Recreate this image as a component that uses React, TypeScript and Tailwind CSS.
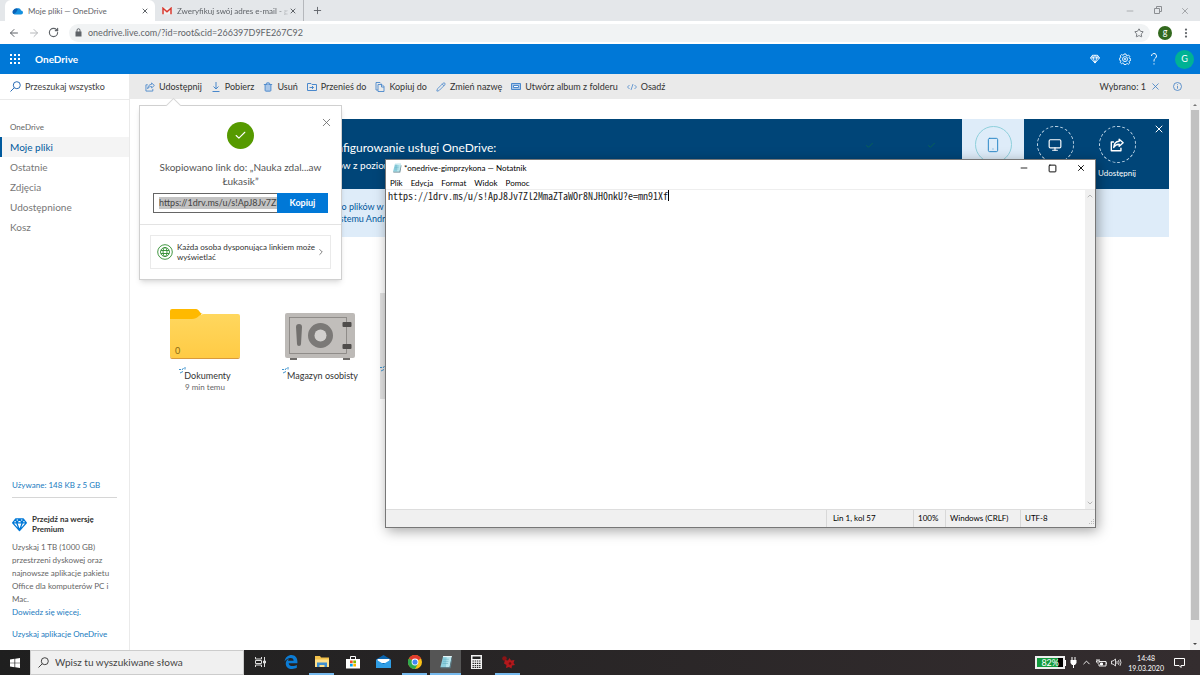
import type { ReactNode } from 'react';
import {
  ArrowLeft, ArrowRight, Check, ChevronDown, ChevronRight, ChevronUp, Minus, Monitor,
  MoreVertical, Pencil, Plus, RotateCw, Smartphone, Square, Star, Trash2, X,
} from 'lucide-react';

const LINK = 'https://1drv.ms/u/s!ApJ8Jv7Zl2MmaZTaWOr8NJH0nkU?e=mn91Xf';

const SearchIcon = () => (
  <svg width="11" height="11" viewBox="0 0 11 11" fill="none" stroke="currentColor">
    <circle cx="6.800" cy="4.200" r="3.500" />
    <path d="M4.300 6.700L.5 10.500" />
  </svg>
);

const ShareIcon = ({ size = 10, stroke = 1 }: { size?: number; stroke?: number }) => (
  <svg width={size} height={size} viewBox="0 0 16 16" fill="none" stroke="currentColor" strokeWidth={stroke} strokeLinejoin="round">
    <path d="M4.500 4.500H1.500v10h11v-3.500" />
    <path d="M10.500 1.500l4.500 4-4.500 4V7.200C7.500 7.200 5.600 8.200 4.200 10.800 4.500 6.500 7 3.900 10.500 3.700z" />
  </svg>
);

const DiamondIcon = ({ size = 10 }: { size?: number }) => (
  <svg width={size} height={size} viewBox="0 0 16 16" fill="none" stroke="currentColor" strokeWidth="1.4" strokeLinejoin="round">
    <path d="M4 2h8l3.300 4.200L8 14.500.7 6.200zM.7 6.200h14.600M5 6.200L8 14.500l3-8.300M4 2l1 4.200L8 2l3 4.200L12 2" />
  </svg>
);

const GearIcon = () => (
  <svg width="12" height="12" viewBox="0 0 24 24" fill="none" stroke="currentColor" strokeWidth="1.800" strokeLinejoin="round">
    <path d="M10 2h4l.7 2.800 1.700.7 2.500-1.500 2.600 2.700-1.300 2.500.6 1.600 2.700.7v3.400l-2.700.8-.6 1.600 1.400 2.500-2.700 2.600-2.500-1.400-1.700.7L14 23h-4l-.7-2.300-1.700-.7-2.500 1.400-2.700-2.600 1.400-2.500-.6-1.600-2.700-.8v-3.400l2.700-.7.6-1.600L2.500 5.700l2.600-2.700 2.500 1.500 1.700-.7z" />
    <circle cx="12" cy="12.200" r="5" />
    <circle cx="12" cy="12.200" r="1.600" />
  </svg>
);

const NotepadIcon = ({ size = 10 }: { size?: number }) => (
  <svg width={size} height={size} viewBox="0 0 20 20">
    <path d="M6 1.500h12l-3 16H2z" fill="#8fd0de" />
    <path d="M11 1.500h7l-3 16h-5z" fill="#b9e6ee" />
    <path d="M2 17.500L15 17.500l3-13 1 .5-2.500 14H3z" fill="#5d7f8a" />
    <path d="M6 1.500h12v1.300H5.700z" fill="#e8f4f6" />
    <path d="M6 6h8M5.500 9h8M5 12h8" stroke="#5aa9bd" strokeWidth=".8" />
  </svg>
);

const commands: { label: string; icon: ReactNode }[] = [
  { label: 'Udostępnij', icon: <ShareIcon stroke={1.400} /> },
  {
    label: 'Pobierz',
    icon: (
      <svg width="10" height="10" viewBox="0 0 10 10" fill="none" stroke="currentColor">
        <path d="M5 0v7M2.500 4.500L5 7l2.500-2.500M1.500 9.500h7" />
      </svg>
    ),
  },
  { label: 'Usuń', icon: <Trash2 size={10} strokeWidth={2.2} fill="#a9c6e8" /> },
  {
    label: 'Przenieś do',
    icon: (
      <svg width="10" height="10" viewBox="0 0 10 10" fill="none" stroke="currentColor">
        <path d="M.5 1.500h3.500l1 1h4.500v6h-9zM2.500 5.500h4M5 4l1.500 1.500L5 7" />
      </svg>
    ),
  },
  {
    label: 'Kopiuj do',
    icon: (
      <svg width="10" height="10" viewBox="0 0 10 10" fill="none" stroke="currentColor" strokeWidth=".9">
        <path d="M3 8H1V.500h4l1 1M3 2.500h4l2 2v5H3zM6.500 2.500V5H9" />
      </svg>
    ),
  },
  { label: 'Zmień nazwę', icon: <Pencil size={10} strokeWidth={2} /> },
  {
    label: 'Utwórz album z folderu',
    icon: (
      <svg width="10" height="10" viewBox="0 0 10 10" fill="#a9c6e8" stroke="currentColor">
        <path d="M.5 1.500h9v6h-9z" />
        <path d="M2.500 3.500h5v2h-5z" fill="#fff" />
      </svg>
    ),
  },
  {
    label: 'Osadź',
    icon: (
      <svg width="10" height="10" viewBox="0 0 10 10" fill="none" stroke="currentColor" strokeWidth=".8">
        <path d="M2.500 3L.5 5l2 2M7.500 3l2 2-2 2M6 2L4 8" />
      </svg>
    ),
  },
];

const navItems = ['Moje pliki', 'Ostatnie', 'Zdjęcia', 'Udostępnione', 'Kosz'];

const BrowserChrome = () => (
  <header>
    <div className="flex h-[21px] items-end bg-[#e4e7ea] pl-[5px] text-[8px] text-[#5f6368]">
      <div className="flex h-[21px] w-[150px] items-center rounded-t-md bg-white pr-1.5 pl-[7px]">
        <svg width="11" height="8" viewBox="0 0 22 14">
          <path d="M8 3a6 6 0 0 1 10 3 4 4 0 0 1 0 8H5a5 5 0 0 1-1-9z" fill="#1490df" />
          <path d="M3 5a6 6 0 0 1 9-2l-4 7-5 3A5 5 0 0 1 3 5z" fill="#0a5fb4" />
        </svg>
        <button className="ml-[5px] flex-1 text-left">Moje pliki — OneDrive</button>
        <button aria-label="Zamknij kartę"><X size={8} strokeWidth={3} /></button>
      </div>
      <div className="flex h-[21px] w-[149px] items-center border-r border-[#b5b8bc] pr-1.5 pl-[7px]">
        <svg width="10" height="8" viewBox="0 0 20 15">
          <path d="M1 1h18v13H1z" fill="#f1f1f1" />
          <path d="M2 14V2l8 7 8-7v12" fill="none" stroke="#d93a30" strokeWidth="3" />
        </svg>
        <button className="ml-[5px] flex-1 overflow-hidden text-left whitespace-nowrap [mask-image:linear-gradient(to_right,black_90%,transparent)]">
          Zweryfikuj swój adres e-mail - g
        </button>
        <button aria-label="Zamknij kartę"><X size={8} strokeWidth={3} /></button>
      </div>
      <button aria-label="Nowa karta" className="ml-2 self-center"><Plus size={11} strokeWidth={2} /></button>
      <div className="ml-auto flex items-center gap-[18px] self-center pr-2.5 text-[#8b8e92]">
        <button aria-label="Minimalizuj"><Minus size={10} strokeWidth={1.5} /></button>
        <button aria-label="Przywróć">
          <svg width="9" height="9" viewBox="0 0 9 9" fill="none" stroke="currentColor">
            <path d="M1.500 2.500h5v5h-5zM3.500 2.500v-2h5v5h-2" />
          </svg>
        </button>
        <button aria-label="Zamknij"><X size={10} strokeWidth={1.800} /></button>
      </div>
    </div>
    <div className="flex h-[23px] items-center bg-white pr-2 pl-2 text-[#5f6368]">
      <button aria-label="Wstecz"><ArrowLeft size={12} strokeWidth={2} /></button>
      <button aria-label="Dalej" className="ml-2 text-[#b6b8bb]"><ArrowRight size={12} strokeWidth={2} /></button>
      <button aria-label="Odśwież" className="ml-2"><RotateCw size={11} strokeWidth={2.5} /></button>
      <div className="ml-2.5 flex h-[18px] flex-1 items-center rounded-full bg-[#f1f3f4] px-1.5">
        <svg width="7" height="9" viewBox="0 0 14 18">
          <path d="M1 7h12v10H1z" fill="#5f6368" />
          <path d="M4 8V4.500a3 3 0 0 1 6 0V8" fill="none" stroke="#5f6368" strokeWidth="2" />
        </svg>
        <input aria-label="Adres" defaultValue="onedrive.live.com/?id=root&cid=266397D9FE267C92" className="ml-1.5 flex-1 bg-transparent text-[9px] outline-none" />
        <button aria-label="Dodaj do zakładek"><Star size={10} strokeWidth={2} /></button>
      </div>
      <button aria-label="Profil" className="ml-2 flex size-[14px] items-center justify-center rounded-full bg-[#33691e] pb-0.5 text-[9px] leading-none text-white">g</button>
      <button aria-label="Menu" className="ml-2"><MoreVertical size={12} strokeWidth={2.5} /></button>
    </div>
  </header>
);

const SuiteBar = () => (
  <div className="flex h-[30px] items-center bg-[#0078d7] pr-1.5 pl-2.5 text-white">
    <button aria-label="Aplikacje">
      <svg width="10" height="10" viewBox="0 0 10 10" fill="currentColor">
        {[0, 4, 8].map((y) => [0, 4, 8].map((x) => <rect key={`${x}-${y}`} x={x} y={y} width="2" height="2" />))}
      </svg>
    </button>
    <a href="#" className="ml-[15px] text-[10px] font-bold">OneDrive</a>
    <div className="ml-auto flex items-center gap-[19px]">
      <button aria-label="Premium"><DiamondIcon /></button>
      <button aria-label="Ustawienia"><GearIcon /></button>
      <button aria-label="Pomoc">
        <svg width="8" height="12" viewBox="0 0 8 12" fill="none" stroke="currentColor">
          <path d="M1.500 3a2.500 2.500 0 1 1 4 2C4.500 5.900 4 6.400 4 8.500M4 10.300v1.200" />
        </svg>
      </button>
      <button aria-label="Konto" className="-ml-0.5 size-[19px] rounded-full bg-[#00b294] text-[9px]">G</button>
    </div>
  </div>
);

const Sidebar = () => (
  <aside className="flex w-[130px] shrink-0 flex-col border-r border-[#eaeaea] text-[#666]">
    <label className="flex h-[26px] items-center border-b border-[#eaeaea] pl-2.5 text-[#2b6cb5]">
      <SearchIcon />
      <input aria-label="Szukaj" placeholder="Przeszukaj wszystko" className="ml-1 w-[95px] text-[9px] outline-none placeholder:text-[#444]" />
    </label>
    <p className="mt-[21px] pl-2.5 text-[8px] leading-3">OneDrive</p>
    <nav className="mt-1 flex flex-col text-[10px] leading-5">
      {navItems.map((item, i) => (
        <a
          key={item}
          href="#"
          className={i === 0 ? 'border-l-2 border-[#005a9e] bg-[#f4f4f4] pl-2 text-[#005a9e]' : 'pl-2.5 text-[#777]'}
        >
          {item}
        </a>
      ))}
    </nav>
    <div className="mt-auto px-3 pb-[10px] text-[8px]">
      <a href="#" className="block border-b border-[#d6d6d6] pb-1.5 leading-3 text-[#1a7bc0]">Używane: 148 KB z 5 GB</a>
      <div className="mt-4 flex items-center gap-[5px] leading-[10px] font-bold text-[#333]">
        <span className="text-[#0078d7]"><DiamondIcon size={15} /></span>
        <span>Przejdź na wersję<br />Premium</span>
      </div>
      <p className="mt-[7px] leading-[13px]">
        Uzyskaj 1 TB (1000 GB)<br />przestrzeni dyskowej oraz<br />najnowsze aplikacje pakietu<br />Office dla komputerów PC i<br />Mac.
      </p>
      <a href="#" className="block leading-3 text-[#1a7bc0]">Dowiedz się więcej.</a>
      <a href="#" className="mt-2.5 block leading-3 text-[#1a7bc0]">Uzyskaj aplikacje OneDrive</a>
    </div>
  </aside>
);

const CommandBar = () => (
  <div className="flex h-[25px] items-center bg-[#eaeaea] pr-[18px] pl-[15px] text-[9px] text-[#333]">
    <div className="flex items-center gap-[9px]">
      {commands.map((c) => (
        <button key={c.label} className="flex items-center gap-1 whitespace-nowrap">
          <span className="text-[#4a88cc]">{c.icon}</span>
          {c.label}
        </button>
      ))}
    </div>
    <div className="ml-auto flex items-center">
      <span>Wybrano: 1</span>
      <button aria-label="Wyczyść" className="ml-1 text-[#3f7fc4]"><X size={11} strokeWidth={1.800} /></button>
      <button aria-label="Informacje" className="ml-3 text-[#3f7fc4]">
        <svg width="9" height="9" viewBox="0 0 9 9" fill="none" stroke="currentColor" strokeWidth=".8">
          <circle cx="4.500" cy="4.500" r="4" />
          <path d="M4.500 4v2.700M4.500 2.300v.9" />
        </svg>
      </button>
    </div>
  </div>
);

const Step = ({ icon, label, active }: { icon: ReactNode; label: string; active?: boolean }) => (
  <button className={active ? 'flex w-[62px] flex-col items-center bg-[#deecf9] pt-[7px] text-[#2b88c8]' : 'flex w-[62px] flex-col items-center pt-[7px]'}>
    <span className={active ? 'flex size-[37px] items-center justify-center rounded-full border border-[#8ed0dc]' : 'flex size-[37px] items-center justify-center rounded-full border border-dashed border-[#c7dcec]'}>
      {icon}
    </span>
    <span className="mt-1 text-[8px] leading-3">{label}</span>
  </button>
);

const Banner = () => (
  <section className="mr-[21px] ml-[25px]">
    <div className="flex h-[70px] bg-[#004578] text-white">
      <div className="flex-1 pt-5 pl-[167px] whitespace-nowrap">
        <h2 className="text-[12px] leading-[18px]">Konfigurowanie usługi OneDrive:</h2>
        <p className="text-[10px] leading-4">plików z poziomu</p>
      </div>
      <div className="flex w-[124px] justify-around pt-[22px] text-[#0b6a4b]">
        <Check size={9} />
        <Check size={9} />
      </div>
      <Step active label="Telefon" icon={<Smartphone size={16} strokeWidth={1.500} />} />
      <Step label="Komputer" icon={<Monitor size={14} strokeWidth={2} />} />
      <Step label="Udostępnij" icon={<ShareIcon size={14} stroke={1.600} />} />
      <button aria-label="Zamknij baner" className="mt-1 mr-1 ml-[5px] self-start"><X size={12} strokeWidth={2} /></button>
    </div>
    <div className="h-[48px] bg-[#deecf9] pt-3 pl-[167px] text-[9px] leading-3 whitespace-nowrap text-[#00579b]">
      <p>np. do plików w</p>
      <p>w systemu Android</p>
    </div>
  </section>
);

const Sparkle = () => (
  <svg width="7" height="7" viewBox="0 0 7 7" fill="none" stroke="#2b88c8" strokeWidth=".9" className="-mt-0.5 -mr-0.5">
    <path d="M0 2.500h2M3 3l1.500-2M6 0v2.500M1 6l3-1.500" />
  </svg>
);

const FolderArt = () => (
  <svg width="70" height="50" viewBox="0 0 70 50">
    <defs>
      <linearGradient id="folder" x1="0" y1="0" x2="0" y2="1">
        <stop offset="0" stopColor="#ffd75e" />
        <stop offset="1" stopColor="#ffcb45" />
      </linearGradient>
    </defs>
    <path d="M0 2a2 2 0 0 1 2-2h24c3 0 4 5 7 5h-2v8H0z" fill="#ffb900" />
    <path d="M0 10h22c6 0 7-5 12-5h34a2 2 0 0 1 2 2v40a2 2 0 0 1-2 2H2a2 2 0 0 1-2-2z" fill="url(#folder)" />
    <path d="M0 47a2 2 0 0 0 2 2h66a2 2 0 0 0 2-2v1a2 2 0 0 1-2 2H2a2 2 0 0 1-2-2z" fill="#d99a3c" />
  </svg>
);

const SafeArt = () => (
  <svg width="70" height="48" viewBox="0 0 70 48">
    <path d="M5 44h7v3H5zM58 44h7v3h-7z" fill="#6f6d6b" />
    <rect width="70" height="45" rx="2" fill="#bdbab7" />
    <rect x="4.500" y="4.500" width="57" height="36" fill="#c1bebb" stroke="#83807e" strokeWidth=".8" />
    <rect x="57.500" y="9" width="9" height="5" rx="1" fill="#4f4d4b" />
    <rect x="57.500" y="31" width="9" height="5" rx="1" fill="#4f4d4b" />
    <path d="M11 14a3 3 0 0 1 6 0l-1 17a2 2 0 0 1-4 0z" fill="#72706e" />
    <circle cx="35.500" cy="22.500" r="9" fill="none" stroke="#7b7977" strokeWidth="7" />
    <circle cx="35.500" cy="22.500" r="6" fill="#d2d0ce" />
  </svg>
);

const Files = () => (
  <div className="mt-[56px] flex gap-[5px] pl-5 text-[9px] text-[#333]">
    <a href="#" className="flex h-[106px] w-[110px] flex-col items-center pt-4">
      <span className="relative"><FolderArt /><span className="absolute bottom-0.5 left-[5px] text-[9px] text-[#8a6a16]">0</span></span>
      <span className="mt-2.5 flex leading-[14px]"><Sparkle />Dokumenty</span>
      <span className="text-[8px] leading-2 text-[#666]">9 min temu</span>
    </a>
    <a href="#" className="flex h-[106px] w-[110px] flex-col items-center pt-5">
      <SafeArt />
      <span className="mt-2 flex leading-[14px]"><Sparkle />Magazyn osobisty</span>
    </a>
    <a href="#" aria-label="Folder" className="h-[106px] w-[110px] bg-[#e3e3e3] pt-[74px]"><Sparkle /></a>
  </div>
);

const ShareCallout = () => (
  <div role="dialog" aria-label="Udostępnianie" className="absolute top-[105px] left-[139px] w-[203px] border border-[#d0d0d0] bg-white pt-4 text-center shadow-md">
    <span className="absolute -top-[6px] left-[28px] size-[11px] rotate-45 border-t border-l border-[#d8d8d8] bg-white" />
    <button aria-label="Zamknij" className="absolute top-[10px] right-2 text-[#666]"><X size={13} strokeWidth={1.500} /></button>
    <span className="mx-auto flex size-[27px] items-center justify-center rounded-full bg-[#569a00] text-white">
      <Check size={13} strokeWidth={2} />
    </span>
    <p className="mt-[11px] text-[10px] leading-[14px] text-[#555]">Skopiowano link do: „Nauka zdal...aw<br />Łukasik”</p>
    <div className="mx-[13px] mt-[5px] flex h-5">
      <div className="flex min-w-0 flex-1 items-center border border-r-0 border-[#666] pl-[5px]">
        <input aria-label="Link" readOnly value={LINK} className="w-full bg-[#c3c3c3] text-[9px] leading-3 text-[#444] outline-none" />
      </div>
      <button className="w-[51px] bg-[#0078d7] text-[9px] font-bold text-white">Kopiuj</button>
    </div>
    <div className="mt-[11px] border-t border-[#e3e3e3] p-[10px]">
      <button className="flex h-[34px] w-full items-center border border-[#eaeaea] px-1.5 text-left text-[8px] leading-[10px] text-[#333]">
        <svg width="16" height="16" viewBox="0 0 16 16" fill="none" stroke="#2e8b2e" strokeWidth=".9">
          <circle cx="8" cy="8" r="7.300" />
          <circle cx="8" cy="8" r="4.500" />
          <ellipse cx="8" cy="8" rx="2" ry="4.500" />
          <path d="M4 6.500h8M4 9.500h8" />
        </svg>
        <span className="ml-1 flex-1 whitespace-nowrap">Każda osoba dysponująca linkiem może<br />wyświetlać</span>
        <ChevronRight size={10} strokeWidth={1.500} className="-mr-0.5 shrink-0" />
      </button>
    </div>
  </div>
);

const Notepad = () => (
  <div className="absolute top-[159px] left-[385px] flex h-[369px] w-[711px] flex-col border border-[#777] bg-white text-[8px] text-black shadow-[2px_3px_12px_rgba(0,0,0,0.35)]">
    <div className="flex h-4 items-center pr-[9px] pl-[6px]">
      <NotepadIcon />
      <span className="ml-0.5">*onedrive-gimprzykona — Notatnik</span>
      <div className="ml-auto flex items-center gap-[19px]">
        <button aria-label="Minimalizuj"><Minus size={10} strokeWidth={2} /></button>
        <button aria-label="Maksymalizuj"><Square size={9} strokeWidth={2.500} /></button>
        <button aria-label="Zamknij"><X size={10} strokeWidth={2.200} /></button>
      </div>
    </div>
    <div className="flex h-[14px] items-center gap-2 border-b border-[#eee] pl-1 leading-3">
      {['Plik', 'Edycja', 'Format', 'Widok', 'Pomoc'].map((m) => <button key={m}>{m}</button>)}
    </div>
    <div className="flex min-h-0 flex-1">
      <div className="flex flex-1 items-start pl-0.5">
        <textarea
          aria-label="Tekst"
          rows={1}
          defaultValue={LINK}
          className="resize-none overflow-hidden font-['Noto_Sans_Mono_CJK_SC','Liberation_Mono',monospace] text-[10px] leading-[12px] whitespace-pre text-[#222] outline-none [field-sizing:content]"
        />
        <span className="h-[11px] w-px bg-black" />
      </div>
      <div className="flex w-[10px] flex-col items-center justify-between bg-[#f0f0f0] py-0.5 text-[#999]">
        <ChevronUp size={8} />
        <ChevronDown size={8} />
      </div>
    </div>
    <div className="flex h-[18px] items-center border-t border-[#ddd] bg-[#f0f0f0] leading-[17px]">
      <span className="ml-auto w-[87px] border-l border-[#d8d8d8] pl-1.5">Lin 1, kol 57</span>
      <span className="w-[32px] border-l border-[#d8d8d8] pl-1">100%</span>
      <span className="w-[75px] border-l border-[#d8d8d8] pl-1">Windows (CRLF)</span>
      <span className="w-[68px] border-l border-[#d8d8d8] pl-1">UTF-8</span>
      <svg width="7" height="7" viewBox="0 0 7 7" fill="#bbb" className="mt-2">
        <path d="M5 0h1v1H5zM3 2h1v1H3zM5 2h1v1H5zM1 4h1v1H1zM3 4h1v1H3zM5 4h1v1H5z" />
      </svg>
    </div>
  </div>
);

const apps: { name: string; state: string; icon: ReactNode }[] = [
  {
    name: 'Widok zadań', state: '',
    icon: (
      <svg width="12" height="12" viewBox="0 0 12 12" fill="none" stroke="#ddd">
        <path d="M1.500 1v2h6V1M1.500 11V9h6v2M1.500 4.500h6v3h-6zM10.500 1v10" />
        <path d="M9.500 5h2v2h-2z" fill="#ddd" />
      </svg>
    ),
  },
  {
    name: 'Edge', state: '',
    icon: (
      <svg width="14" height="14" viewBox="0 0 24 24" fill="#0c7cd5">
        <path d="M1 11C2 4 7 0 13 0c6 0 10 5 10 11v3H8c.3 3.500 3 5 7 5 2.500 0 5-.8 7-2v5c-2 1.300-5 2-8 2-7 0-11-4-11-9.500C3 11 5 8 8.500 6.500 7.500 7.500 7 9 7 10h9.500c0-3-1.500-5-5-5C7.500 5 3.500 7 1 11z" />
      </svg>
    ),
  },
  {
    name: 'Eksplorator', state: 'open',
    icon: (
      <svg width="14" height="12" viewBox="0 0 14 12">
        <path d="M0 0h5l1 1.500h8V11H0z" fill="#f3c14b" />
        <path d="M0 3.500h14V11H0z" fill="#ffe08a" />
        <path d="M2 11V6.500h10V11H9.500V9h-5v2z" fill="#3f8fd0" />
      </svg>
    ),
  },
  {
    name: 'Sklep', state: '',
    icon: (
      <svg width="14" height="14" viewBox="0 0 14 14">
        <path d="M4.500 4V1.500h5V4" fill="none" stroke="#fff" />
        <path d="M0 4h14v9.500H0z" fill="#fff" />
        <path d="M4 5.500h2.700v2.700H4z" fill="#f25022" />
        <path d="M7.300 5.500H10v2.700H7.300z" fill="#7fba00" />
        <path d="M4 8.800h2.700v2.700H4z" fill="#00a4ef" />
        <path d="M7.300 8.800H10v2.700H7.300z" fill="#ffb900" />
      </svg>
    ),
  },
  {
    name: 'Poczta', state: '',
    icon: (
      <svg width="15" height="13" viewBox="0 0 15 13">
        <path d="M0 4.500L7.500 0 15 4.500V13H0z" fill="#0a64ad" />
        <path d="M1.500 4h12v4h-12z" fill="#fff" />
        <path d="M0 4.500l7.500 4.500L15 4.500V13H0z" fill="#2f9de4" />
      </svg>
    ),
  },
  {
    name: 'Chrome', state: 'open',
    icon: (
      <svg width="14" height="14" viewBox="0 0 24 24">
        <circle cx="12" cy="12" r="12" fill="#fbc116" />
        <path d="M12 12L1.600 6A12 12 0 0 1 22.400 6z" fill="#e33b2e" />
        <path d="M12 12L1.600 6A12 12 0 0 0 12 24l5-9z" fill="#2da94f" />
        <circle cx="12" cy="12" r="5.800" fill="#fff" />
        <circle cx="12" cy="12" r="4.400" fill="#4386f5" />
      </svg>
    ),
  },
  { name: 'Notatnik', state: 'active', icon: <NotepadIcon size={14} /> },
  {
    name: 'Kalkulator', state: '',
    icon: (
      <svg width="11" height="14" viewBox="0 0 11 14">
        <path d="M0 0h11v14H0z" fill="#f2f2f2" />
        <path d="M1.500 1.500h8v2.500h-8z" fill="#222" />
        <path d="M1.500 6h8M1.500 8.300h8M1.500 10.600h8M1.500 12.500h8" stroke="#222" strokeWidth="1.200" strokeDasharray="1.400 .8" />
      </svg>
    ),
  },
  {
    name: 'IrfanView', state: 'open',
    icon: (
      <svg width="14" height="14" viewBox="0 0 14 14">
        <circle cx="3.500" cy="3.500" r="2.300" fill="#8c1416" />
        <path d="M4 5l3 .5L8.500 3l1.500 2.500 3.500-.5-1 3 1.500 2-3 .5-.5 3-2.500-1.500L5 13l.5-3L3 8.500z" fill="#b3181c" />
        <circle cx="9" cy="8.500" r="1.300" fill="#6c0d10" />
      </svg>
    ),
  },
];

const appStyles: Record<string, string> = {
  '': 'flex w-[31px] items-center justify-center border-b-2 border-transparent',
  open: 'mx-[3px] flex w-[25px] items-center justify-center border-b-2 border-[#76b9ed]',
  active: 'flex w-[31px] items-center justify-center border-b-2 border-[#76b9ed] bg-[#555]',
};

const Taskbar = () => (
  <footer className="flex h-[25px] items-stretch bg-linear-to-r from-[#1f1f1f] to-[#342d2f] text-[7px] text-white">
    <button aria-label="Start" className="flex w-[30px] items-center justify-center">
      <svg width="10" height="10" viewBox="0 0 10 10" fill="#fff">
        <path d="M0 1.500L4.500.8v3.900H0zM5.200.7L10 0v4.700H5.200zM0 5.300h4.500v3.900L0 8.500zM5.200 5.300H10V10l-4.800-.7z" />
      </svg>
    </button>
    <label className="flex w-[214px] items-center border border-[#ccc] bg-[#f0f0f0] pl-[7px] text-[#444]">
      <SearchIcon />
      <input aria-label="Wyszukaj" placeholder="Wpisz tu wyszukiwane słowa" className="ml-1.5 flex-1 text-[10px] outline-none placeholder:text-[#444]" />
    </label>
    {apps.map((a) => (
      <button key={a.name} aria-label={a.name} className={appStyles[a.state]}>
        {a.icon}
      </button>
    ))}
    <div className="ml-auto flex items-center pr-[15px]">
      <div className="flex h-[13px] w-[30px] items-center justify-center border-2 border-[#eee] bg-linear-to-r from-[#129a3d] from-80% to-black to-80% text-[9px] leading-[9px]">82%</div>
      <span className="h-[6px] w-px bg-white" />
      <svg width="7" height="11" viewBox="0 0 7 11" fill="#fff" className="ml-1">
        <path d="M1.500 0h1v3h2V0h1v3h1v3L5 8H4v3H3V8H2L.5 6V3h1z" />
      </svg>
      <ChevronUp size={11} strokeWidth={2} className="ml-1" />
      <svg width="11" height="8" viewBox="0 0 11 8" fill="none" stroke="#fff" strokeWidth=".9" className="ml-1">
        <path d="M4 2.500h6v4.500H3V5M10 4h1v1.500M1 0v2M3 0v2M.5 2h3v1L2 4.500.5 3z" />
        <path d="M4.500 4h2v2h-2z" fill="#fff" />
      </svg>
      <svg width="11" height="9" viewBox="0 0 11 9" fill="none" stroke="#fff" strokeWidth=".8" className="ml-1">
        <path d="M.5 3h1.500L4.500 1v7L2 6H.5zM6 3v3M7.500 2.200q1 2.300 0 4.600M9 1.200q2 3.300 0 6.600" />
      </svg>
      <div className="ml-1.5 text-center leading-[10px]"><p>14:48</p><p>19.03.2020</p></div>
      <svg width="11" height="11" viewBox="0 0 11 11" fill="none" stroke="#fff" className="ml-[10px]">
        <path d="M.5 1.500h10v7H7v2l-2-2H.5z" />
      </svg>
    </div>
  </footer>
);

const App = () => (
  <div className="relative flex min-h-screen flex-col overflow-hidden bg-white font-[Lato,'Open_Sans',sans-serif]">
    <BrowserChrome />
    <SuiteBar />
    <div className="flex flex-1">
      <Sidebar />
      <div className="flex min-w-0 flex-1 flex-col">
        <CommandBar />
        <div className="flex flex-1">
          <main className="min-w-0 flex-1 pt-5">
            <Banner />
            <Files />
          </main>
          <div className="flex w-[10px] flex-col items-center bg-[#f1f1f1] text-[#777]">
            <svg width="6" height="11" viewBox="0 0 6 11" fill="currentColor"><path d="M1 7l2-2 2 2z" /></svg>
            <span className="w-2 flex-1 bg-[#c1c1c1]" />
            <svg width="6" height="30" viewBox="0 0 6 30" fill="#444"><path d="M1 23l2 2 2-2z" /></svg>
          </div>
        </div>
      </div>
    </div>
    <Taskbar />
    <ShareCallout />
    <Notepad />
  </div>
);

export default App;
